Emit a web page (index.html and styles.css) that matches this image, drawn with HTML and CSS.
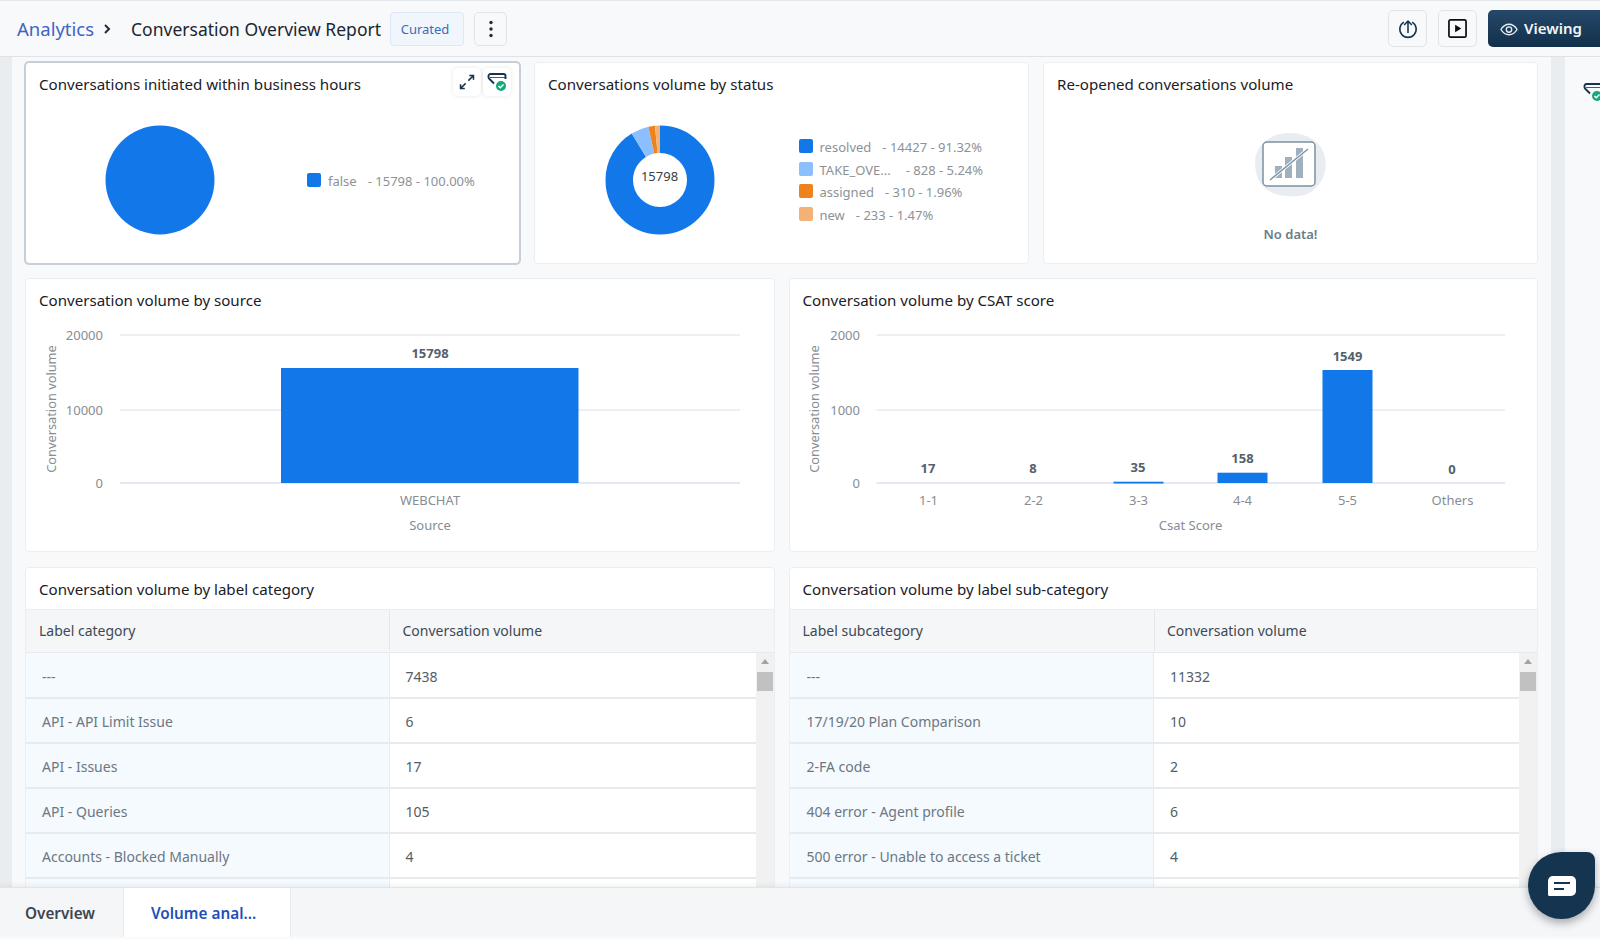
FILE: index.html
```html
<!DOCTYPE html>
<html lang="en">
<head>
<meta charset="utf-8">
<title>Conversation Overview Report</title>
<link rel="stylesheet" href="styles.css">
</head>
<body>
<div class="app">
  <header class="topbar">
    <a class="crumb">Analytics</a>
    <svg class="chevron" viewBox="0 0 10 12" width="10" height="12"><path d="M3 2 7 6 3 10" fill="none" stroke="#1f2d3a" stroke-width="2"/></svg>
    <h1 class="report-title">Conversation Overview Report</h1>
    <span class="tag">Curated</span>
    <button class="icon-btn dots-btn"><svg viewBox="0 0 4 18" width="4" height="18"><circle cx="2" cy="2.5" r="1.7" fill="#1f2d3a"/><circle cx="2" cy="9" r="1.7" fill="#1f2d3a"/><circle cx="2" cy="15.5" r="1.7" fill="#1f2d3a"/></svg></button>
    <div class="top-actions">
      <button class="icon-btn action-btn"><svg viewBox="0 0 22 22" width="20" height="20"><path d="M6.5 3.4A9 9 0 1 0 15.5 3.4" fill="none" stroke="#16344f" stroke-width="1.7"/><path d="M11 15.5V2.5M6.8 6.6 11 2.2l4.2 4.4" fill="none" stroke="#16344f" stroke-width="1.7"/></svg></button>
      <button class="icon-btn action-btn"><svg viewBox="0 0 20 20" width="19" height="19"><rect x="1" y="1" width="18" height="18" rx="1.5" fill="none" stroke="#0c0f12" stroke-width="1.8"/><path d="M7.5 6 14 10l-6.5 4z" fill="#0c0f12"/></svg></button>
      <button class="viewing-btn"><svg class="eye" viewBox="0 0 20 14" width="18" height="13"><path d="M1 7C3.500 3 6.500 1.200 10 1.200S16.500 3 19 7C16.500 11 13.500 12.800 10 12.800S3.500 11 1 7Z" fill="none" stroke="#e8eef4" stroke-width="1.5"/><circle cx="10" cy="7" r="3" fill="none" stroke="#e8eef4" stroke-width="1.5"/></svg>Viewing</button>
    </div>
  </header>

  <div class="middle">
    <div class="gutter"></div>
    <main class="content">
      <section class="row row-three">
        <article class="card small-card selected">
          <h2 class="card-title">Conversations initiated within business hours</h2>
          <div class="card-tools">
            <span class="tool"><svg viewBox="0 0 20 20" width="18" height="18"><path d="M11.500 8.500 17 3M12.500 2.800h4.700v4.700M8.500 11.500 3 17M7.500 17.200H2.800v-4.700" fill="none" stroke="#16344f" stroke-width="1.700"/></svg></span>
            <span class="tool"><svg viewBox="0 0 20 20" width="20" height="20"><use href="#funnel-ok"/></svg></span>
          </div>
          <div class="pie-wrap">
            <svg class="pie" viewBox="0 0 110 110" width="110" height="110"><circle cx="55" cy="55" r="54.500" fill="#1277e9"/></svg>
            <ul class="legend legend-pie">
              <li><i class="sw sw-blue"></i><span class="lg-name">false</span><span>- 15798 - 100.00%</span></li>
            </ul>
          </div>
        </article>
        <article class="card small-card">
          <h2 class="card-title">Conversations volume by status</h2>
          <div class="donut-wrap">
            <div class="donut">
              <svg viewBox="0 0 110 110" width="110" height="110">
                <g transform="rotate(-90 55 55)" fill="none" stroke-width="27.500">
                  <circle cx="55" cy="55" r="40.750" pathLength="100" stroke="#1277e9" stroke-dasharray="91.32 100"/>
                  <circle cx="55" cy="55" r="40.750" pathLength="100" stroke="#8cbfff" stroke-dasharray="5.24 100" stroke-dashoffset="-91.32"/>
                  <circle cx="55" cy="55" r="40.750" pathLength="100" stroke="#ee821c" stroke-dasharray="1.96 100" stroke-dashoffset="-96.56"/>
                  <circle cx="55" cy="55" r="40.750" pathLength="100" stroke="#f4b175" stroke-dasharray="1.48 100" stroke-dashoffset="-98.52"/>
                </g>
              </svg>
              <span class="donut-total">15798</span>
            </div>
            <ul class="legend legend-donut">
              <li><i class="sw sw-blue"></i><span class="lg-name">resolved</span><span>- 14427 - 91.32%</span></li>
              <li><i class="sw sw-sky"></i><span class="lg-name lg-name-long">TAKE_OVE...</span><span>- 828 - 5.24%</span></li>
              <li><i class="sw sw-orange"></i><span class="lg-name">assigned</span><span>- 310 - 1.96%</span></li>
              <li><i class="sw sw-peach"></i><span class="lg-name">new</span><span>- 233 - 1.47%</span></li>
            </ul>
          </div>
        </article>
        <article class="card small-card">
          <h2 class="card-title">Re-opened conversations volume</h2>
          <div class="empty">
            <svg viewBox="0 0 72 64" width="72" height="64">
              <path d="M34 0C50 0 66 7 70 24 73 38 67 51 56 59 46 65 26 65 14 58 3 52 0 40 0 28 1 11 16 0 34 0Z" fill="#e9edf2"/>
              <rect x="8" y="9" width="52" height="44" rx="4" fill="#fff" stroke="#7d90a3" stroke-width="1.500"/>
              <path d="M20 33h7v12h-7zM30 24h7v21h-7zM41 15h7v30h-7z" fill="#9fb0bf"/>
              <path d="M15 47 53 16" stroke="#fff" stroke-width="3"/>
              <path d="M15 47 53 16" stroke="#7d90a3" stroke-width="1.400"/>
            </svg>
            <p class="empty-text">No data!</p>
          </div>
        </article>
      </section>

      <section class="row row-two row-charts">
        <article class="card chart-card">
          <h2 class="card-title">Conversation volume by source</h2>
          <svg class="chart" viewBox="0 0 747 231" width="747" height="231">
            <path class="grid-line" d="M94 15H714M94 90H714"/>
            <path class="axis-line" d="M94 163H714"/>
            <rect class="bar" x="255" y="48" width="297.500" height="115"/>
            <text class="tick end" x="77" y="20">20000</text>
            <text class="tick end" x="77" y="94.500">10000</text>
            <text class="tick end" x="77" y="168">0</text>
            <text class="val mid" x="404" y="38">15798</text>
            <text class="tick mid" x="404" y="185">WEBCHAT</text>
            <text class="tick mid" x="404" y="209.500">Source</text>
            <text class="tick mid y-title" transform="translate(30 89) rotate(-90)">Conversation volume</text>
          </svg>
        </article>
        <article class="card chart-card">
          <h2 class="card-title">Conversation volume by CSAT score</h2>
          <svg class="chart" viewBox="0 0 747 231" width="747" height="231">
            <path class="grid-line" d="M86.500 15H715M86.500 90H715"/>
            <path class="axis-line" d="M86.500 163H715"/>
            <rect class="bar" x="323.500" y="161.700" width="50" height="1.800"/>
            <rect class="bar" x="427.500" y="152.700" width="50" height="10.300"/>
            <rect class="bar" x="532.500" y="50" width="50" height="113"/>
            <text class="tick end" x="70" y="20">2000</text>
            <text class="tick end" x="70" y="94.500">1000</text>
            <text class="tick end" x="70" y="168">0</text>
            <text class="val mid" x="138" y="153">17</text>
            <text class="val mid" x="243" y="153">8</text>
            <text class="val mid" x="348" y="151.500">35</text>
            <text class="val mid" x="452.500" y="143">158</text>
            <text class="val mid" x="557.500" y="41">1549</text>
            <text class="val mid" x="662" y="154">0</text>
            <text class="tick mid" x="138.500" y="185">1-1</text>
            <text class="tick mid" x="243.500" y="185">2-2</text>
            <text class="tick mid" x="348.500" y="185">3-3</text>
            <text class="tick mid" x="452.500" y="185">4-4</text>
            <text class="tick mid" x="557.500" y="185">5-5</text>
            <text class="tick mid" x="662.500" y="185">Others</text>
            <text class="tick mid" x="400.500" y="209.500">Csat Score</text>
            <text class="tick mid y-title" transform="translate(29 89) rotate(-90)">Conversation volume</text>
          </svg>
        </article>
      </section>

      <section class="row row-two row-tables">
        <article class="card table-card">
          <h2 class="card-title">Conversation volume by label category</h2>
          <div class="tbl-head"><div>Label category</div><div>Conversation volume</div></div>
          <div class="tbl-body">
            <table class="tbl">
              <tr><td>---</td><td>7438</td></tr>
              <tr><td>API - API Limit Issue</td><td>6</td></tr>
              <tr><td>API - Issues</td><td>17</td></tr>
              <tr><td>API - Queries</td><td>105</td></tr>
              <tr><td>Accounts - Blocked Manually</td><td>4</td></tr>
              <tr><td></td><td></td></tr>
            </table>
            <div class="fake-scroll"><i class="scroll-up"></i><i class="scroll-thumb"></i></div>
          </div>
        </article>
        <article class="card table-card table-wide">
          <h2 class="card-title">Conversation volume by label sub-category</h2>
          <div class="tbl-head"><div>Label subcategory</div><div>Conversation volume</div></div>
          <div class="tbl-body">
            <table class="tbl">
              <tr><td>---</td><td>11332</td></tr>
              <tr><td>17/19/20 Plan Comparison</td><td>10</td></tr>
              <tr><td>2-FA code</td><td>2</td></tr>
              <tr><td>404 error - Agent profile</td><td>6</td></tr>
              <tr><td>500 error - Unable to access a ticket</td><td>4</td></tr>
              <tr><td></td><td></td></tr>
            </table>
            <div class="fake-scroll"><i class="scroll-up"></i><i class="scroll-thumb"></i></div>
          </div>
        </article>
      </section>
    </main>
    <div class="track"></div>
    <aside class="rail"><svg viewBox="0 0 20 20" width="20" height="20"><use href="#funnel-ok"/></svg></aside>
  </div>

  <nav class="tabs">
    <a class="tab tab-first">Overview</a>
    <a class="tab tab-active">Volume anal...</a>
  </nav>

  <button class="chat"><svg viewBox="0 0 28 20" width="28" height="20"><path d="M5 0h18a5 5 0 0 1 5 5v10a5 5 0 0 1-5 5H1.500A1.500 1.500 0 0 1 0 18.500V5a5 5 0 0 1 5-5Z" fill="#fff"/><path d="M6 7h16M6 13h10" stroke="#14344f" stroke-width="2"/></svg></button>
</div>

<svg class="defs" width="0" height="0">
  <symbol id="funnel-ok" viewBox="0 0 20 20">
    <path d="M18.500 7V4c0-1.200-.8-2-2-2h-13c-1.200 0-2 .8-2 2v1c0 .8.300 1.400 1 2l4.500 4.500" fill="none" stroke="#16344f" stroke-width="1.900"/>
    <path d="M18.500 5.500H3" fill="none" stroke="#16344f" stroke-width=".8"/>
    <circle cx="14" cy="14" r="5" fill="#12a97c"/>
    <path d="M11.500 14l1.800 1.800 3.200-3.300" fill="none" stroke="#fff" stroke-width="1.500"/>
  </symbol>
</svg>
</body>
</html>
```
FILE: styles.css
```css
* { box-sizing: border-box; }
html, body { margin: 0; height: 100%; }
body {
  font-family: "Noto Sans", "Open Sans", sans-serif;
  color: #1d2630;
  background: #fcfcfd;
  overflow: hidden;
}
h1, h2, p, ul { margin: 0; padding: 0; }
ul { list-style: none; }
button { font-family: inherit; cursor: pointer; }

.app { position: relative; display: flex; flex-direction: column; height: 940px; }

/* top bar */
.topbar {
  flex: 0 0 57px;
  display: flex;
  align-items: center;
  padding-left: 17px;
  background: #f7f9fb;
  border-top: 1px solid #e3e7eb;
  border-bottom: 1px solid #dfe3e8;
  z-index: 3;
}
.crumb { font-size: 18.500px; color: #3f63c4; line-height: 24px; }
.chevron { margin-left: 8px; margin-right: 19px; }
.report-title { font-size: 17.500px; font-weight: 400; color: #1d2630; line-height: 24px; }
.tag {
  margin-left: 9px;
  height: 34px;
  width: 74px;
  display: flex;
  align-items: center;
  justify-content: center;
  padding-right: 4px;
  font-size: 13px;
  color: #3d6cb6;
  background: #f1f6fd;
  border: 1px solid #dce8f8;
  border-radius: 4px;
}
.icon-btn {
  display: flex;
  align-items: center;
  justify-content: center;
  padding: 0;
  background: #f8f9fb;
  border: 1px solid #e0e4e9;
  border-radius: 5px;
}
.dots-btn { margin-left: 10px; width: 33px; height: 34px; }
.top-actions { margin-left: auto; display: flex; align-items: center; }
.action-btn { width: 39px; height: 37px; margin-right: 11px; }
.viewing-btn {
  width: 112px;
  height: 37px;
  display: flex;
  align-items: center;
  gap: 6px;
  padding: 0 0 2px 12px;
  color: #f2f5f8;
  font-size: 15px;
  font-weight: 600;
  background: linear-gradient(#26486a, #12304a);
  border: 0;
  border-radius: 5px 0 0 5px;
}
.eye { margin-top: 4px; }

/* main area */
.middle { flex: 1; display: flex; min-height: 0; background: #f8f9fb; }
.gutter { flex: 0 0 12px; background: #e9edf0; }
.content { flex: 1; min-width: 0; overflow: hidden; padding: 5px 13px 0; }
.track { flex: 0 0 14px; background: #e9edf0; }
.rail { flex: 0 0 35px; padding: 25px 0 0 18px; overflow: hidden; }
.row { display: grid; column-gap: 14px; }
.row-three { grid-template-columns: repeat(3, 1fr); }
.row-two { grid-template-columns: repeat(2, 1fr); }
.row-charts { margin-top: 14px; }
.row-tables { margin-top: 15px; }

.card {
  position: relative;
  background: #fff;
  border: 1px solid #eceff2;
  border-radius: 4px;
}
.selected { box-shadow: 0 0 0 1px #c6ced7; border-color: #c6ced7; }
.small-card { height: 202px; }
.chart-card { height: 274px; }
.table-card { height: 340px; border-bottom: 0; }
.card-title {
  font-size: 15.100px;
  font-weight: 400;
  line-height: 20px;
  color: #1a2027;
  padding: 11px 0 10px 13px;
  height: 41px;
}

/* tool buttons */
.card-tools { position: absolute; top: 5px; right: 8px; display: flex; gap: 2px; }
.tool {
  width: 28px;
  height: 28px;
  display: flex;
  align-items: center;
  justify-content: center;
  background: #fff;
  border-radius: 5px;
  box-shadow: 0 0 4px rgba(40, 60, 80, .12);
}

/* pie and donut */
.pie-wrap, .donut-wrap { display: flex; align-items: flex-start; }
.pie { margin: 21px 0 0 78.500px; }
.donut { position: relative; width: 110px; height: 110px; margin: 21px 0 0 69.500px; }
.donut svg { display: block; }
.donut-total {
  position: absolute;
  inset: 0 0 9px 0;
  display: flex;
  align-items: center;
  justify-content: center;
  font-size: 13px;
  color: #3a4048;
}
.legend { font-size: 13px; color: #8d9297; }
.legend li { display: flex; align-items: center; height: 22.500px; }
.lg-name { margin-right: 11px; }
.lg-name-long { margin-right: 15px; }
.sw { flex: none; width: 14px; height: 14px; margin-right: 7px; border-radius: 2px; transform: translateY(-1px); }
.sw-blue { background: #1277e9; }
.sw-sky { background: #8cbfff; }
.sw-orange { background: #ee821c; }
.sw-peach { background: #f4b175; }
.legend-pie { margin: 66px 0 0 92.500px; }
.legend-donut { margin: 32px 0 0 84px; }

/* no data */
.empty { display: flex; flex-direction: column; align-items: center; padding-top: 29px; }
.empty svg { display: block; }
.empty-text { margin-top: 28px; font-size: 13px; font-weight: 600; color: #6b7b8a; line-height: 18px; }

/* charts */
.chart { display: block; }
.grid-line { fill: none; stroke: #e8ebf0; stroke-width: 1.500; }
.axis-line { fill: none; stroke: #dbe1ee; stroke-width: 1.500; }
.bar { fill: #1277e9; }
.chart text { font-family: "Noto Sans", "Open Sans", sans-serif; }
.tick { font-size: 13px; fill: #878d93; }
.val { font-size: 13px; font-weight: 700; fill: #56616c; }
.end { text-anchor: end; }
.mid { text-anchor: middle; }
.y-title { font-size: 12.800px; }

/* tables */
.tbl-head {
  display: grid;
  grid-template-columns: 363px 1fr;
  height: 44px;
  padding-bottom: 2px;
  background: #f5f6f8;
  border-top: 1px solid #eceff2;
  border-bottom: 1px solid #e6e9ed;
  font-size: 14px;
  color: #3d4955;
}
.tbl-head div { display: flex; align-items: center; padding-left: 13px; }
.tbl-head div + div { border-left: 1px solid #e4e7eb; padding-left: 12.500px; }
.tbl-body { display: flex; align-items: flex-start; }
.tbl { flex: 1; border-collapse: collapse; table-layout: fixed; font-size: 14px; color: #6c7782; }
.tbl td { height: 45px; padding: 2px 0 0 16px; border-bottom: 2px solid #e7ebee; background: #fff; }
.tbl td:first-child { width: 363px; background: #f5faff; }
.tbl td:last-child { border-left: 1px solid #e7ebee; color: #525d68; }
.table-wide .tbl-head { grid-template-columns: 364px 1fr; }
.table-wide .tbl td:first-child { width: 364px; padding-left: 17px; }
.fake-scroll { position: relative; flex: 0 0 18px; height: 270px; background: #f1f1f1; }
.scroll-up {
  position: absolute;
  top: 6px;
  left: 5px;
  border-left: 4px solid transparent;
  border-right: 4px solid transparent;
  border-bottom: 5px solid #a3a3a3;
}
.scroll-thumb { position: absolute; top: 19px; left: 1px; width: 16px; height: 19px; background: #c1c1c1; }

/* tabs */
.tabs {
  flex: 0 0 50px;
  margin-bottom: 3px;
  display: flex;
  background: #f5f6f8;
  border-top: 1px solid #e1e4e8;
  box-shadow: 0 -2px 4px rgba(60, 70, 80, .07);
  z-index: 2;
}
.tab {
  display: flex;
  align-items: center;
  font-size: 15.300px;
  font-weight: 600;
  color: #3d4650;
}
.tab-first { width: 123px; padding-left: 25px; }
.tab-active { width: 168px; padding-left: 27px; background: #fff; color: #1f4fb8; border-left: 1px solid #e6e9ed; border-right: 1px solid #e6e9ed; }

/* chat bubble */
.chat {
  position: absolute;
  left: 1528px;
  top: 852px;
  width: 67px;
  height: 67px;
  display: flex;
  align-items: center;
  justify-content: center;
  padding: 0;
  background: #14344f;
  border: 0;
  border-radius: 50% 8px 50% 50%;
  box-shadow: 0 4px 8px rgba(20, 30, 40, .35);
  z-index: 4;
}
.chat svg { display: block; }
.defs { position: absolute; }
```
